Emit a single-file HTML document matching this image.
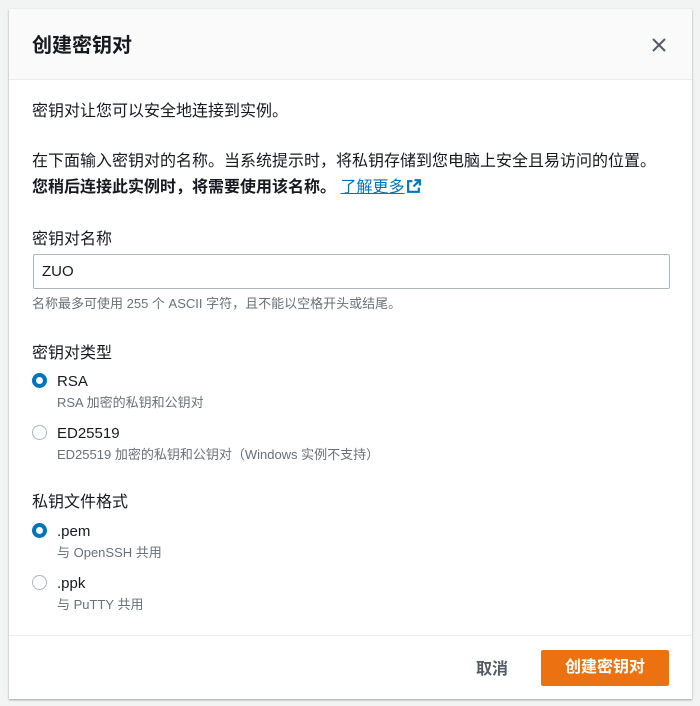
<!DOCTYPE html>
<html><head><meta charset="utf-8"><style>
*{margin:0;padding:0;box-sizing:border-box}
body{width:700px;height:706px;background:#f2f3f3;position:relative;overflow:hidden;font-family:"Liberation Sans","Noto Sans CJK SC",sans-serif;color:#16191f}
.m{position:absolute;left:9px;top:9px;width:683px;height:690px;background:#fff;box-shadow:0 1px 2px rgba(0,0,0,.35)}
.h{position:absolute;left:0;top:0;width:683px;height:71px;background:#fafafa;border-bottom:1px solid #eaeded}
.a{position:absolute;white-space:nowrap}
.t{font-size:16px;line-height:22px}
.l{font-size:15px;line-height:22px}
.s{font-size:13px;line-height:18px;color:#687078}
.r{position:absolute;width:15px;height:15px;border-radius:50%;border:1.5px solid #aab7b8;background:#fff}
.r.on{border:4px solid #0073bb}
</style></head><body>
<div class="m">
<div class="h"></div>
<div class="a" style="left:23px;top:23px;font-size:20px;font-weight:bold;line-height:28px">创建密钥对</div>
<svg class="a" style="left:643px;top:29px" width="14" height="14" viewBox="0 0 14 14"><path d="M1 1L13 13M13 1L1 13" stroke="#545b64" stroke-width="2"/></svg>
<div class="a t" style="left:23px;top:92px">密钥对让您可以安全地连接到实例。</div>
<div class="a t" style="left:23px;top:142px">在下面输入密钥对的名称。当系统提示时，将私钥存储到您电脑上安全且易访问的位置。</div>
<div class="a t" style="left:23px;top:168px"><b>您稍后连接此实例时，将需要使用该名称。</b> <span style="color:#0073bb;text-decoration:underline">了解更多</span><svg style="vertical-align:-2px;margin-left:2px" width="16" height="16" viewBox="0 0 15 15"><path d="M8 2h5v5M13 2L7 8M6 3H2v10h10V9" stroke="#0073bb" stroke-width="2" fill="none"/></svg></div>
<div class="a t" style="left:23px;top:220px">密钥对名称</div>
<div class="a" style="left:24px;top:245px;width:637px;height:35px;border:1px solid #aab7b8;border-radius:2px"></div>
<div class="a l" style="left:33px;top:252px">ZUO</div>
<div class="a s" style="left:23px;top:286px">名称最多可使用 255 个 ASCII 字符，且不能以空格开头或结尾。</div>
<div class="a t" style="left:23px;top:334px">密钥对类型</div>
<div class="r on" style="left:23px;top:364px"></div>
<div class="a l" style="left:48px;top:362px">RSA</div>
<div class="a s" style="left:48px;top:385px">RSA 加密的私钥和公钥对</div>
<div class="r" style="left:23px;top:416px"></div>
<div class="a l" style="left:48px;top:414px">ED25519</div>
<div class="a s" style="left:48px;top:437px">ED25519 加密的私钥和公钥对（Windows 实例不支持）</div>
<div class="a t" style="left:23px;top:483px">私钥文件格式</div>
<div class="r on" style="left:23px;top:514px"></div>
<div class="a l" style="left:48px;top:512px">.pem</div>
<div class="a s" style="left:48px;top:535px">与 OpenSSH 共用</div>
<div class="r" style="left:23px;top:566px"></div>
<div class="a l" style="left:48px;top:564px">.ppk</div>
<div class="a s" style="left:48px;top:587px">与 PuTTY 共用</div>
<div class="a" style="left:0;top:626px;width:683px;height:1px;background:#eaeded"></div>
<div class="a t" style="left:467px;top:650px;font-weight:bold;color:#545b64">取消</div>
<div class="a" style="left:532px;top:641px;width:128px;height:36px;background:#ec7211;border-radius:2px;color:#fff;font-size:16px;font-weight:bold;line-height:36px;text-align:center">创建密钥对</div>
</div>
</body></html>
